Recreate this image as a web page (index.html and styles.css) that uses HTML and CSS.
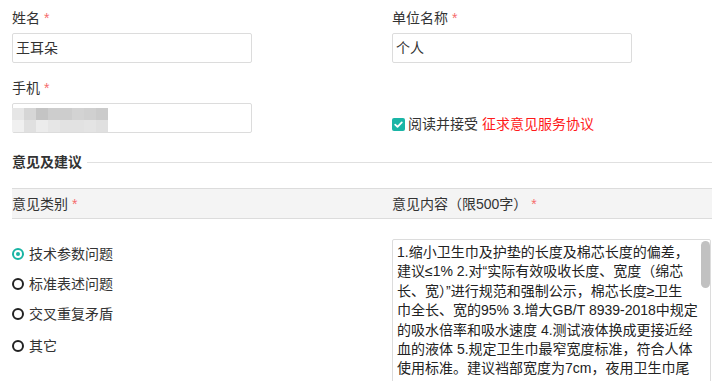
FILE: index.html
```html
<!DOCTYPE html>
<html lang="zh-CN">
<head>
<meta charset="utf-8">
<title>意见及建议</title>
<link rel="stylesheet" href="styles.css">
</head>
<body>
<div class="page">
  <div class="grid">
    <div class="col">
      <div class="field">
        <div class="label">姓名 <span class="req">*</span></div>
        <div class="input">王耳朵</div>
      </div>
      <div class="field field2">
        <div class="label">手机 <span class="req">*</span></div>
        <div class="input redacted-wrap">
          <div class="redact">
            <div class="rrow"><i style="background:#e6e6e6"></i><i style="background:#d6d6d6"></i><i style="background:#c4c4c4"></i><i style="background:#cdcdcd"></i><i style="background:#cdcdcd"></i><i style="background:#d3d3d3"></i><i style="background:#d0d0d0"></i><i style="background:#cbcbcb"></i></div>
            <div class="rrow"><i style="background:#f0f0f0"></i><i style="background:#e0e0e0"></i><i style="background:#ececec"></i><i style="background:#e6e6e6"></i><i style="background:#e2e2e2"></i><i style="background:#e2e2e2"></i><i style="background:#e4e4e4"></i><i style="background:#e0e0e0"></i></div>
          </div>
        </div>
      </div>
    </div>
    <div class="col">
      <div class="field">
        <div class="label">单位名称 <span class="req">*</span></div>
        <div class="input">个人</div>
      </div>
      <div class="agree">
        <span class="checkbox"><svg viewBox="0 0 13 13" width="13" height="13"><path d="M3.2 6.6 L5.5 8.8 L9.8 4.4" fill="none" stroke="#fff" stroke-width="1.8" stroke-linecap="round" stroke-linejoin="round"/></svg></span>
        <span class="agree-text">阅读并接受 <span class="link">征求意见服务协议</span></span>
      </div>
    </div>
  </div>

  <div class="section-title"><span>意见及建议</span><span class="line"></span></div>

  <div class="thead">
    <div class="th">意见类别 <span class="req">*</span></div>
    <div class="th">意见内容（限500字） <span class="req">*</span></div>
  </div>

  <div class="body-grid">
    <div class="radios">
      <div class="radio-row"><span class="radio checked"></span><span>技术参数问题</span></div>
      <div class="radio-row"><span class="radio"></span><span>标准表述问题</span></div>
      <div class="radio-row"><span class="radio"></span><span>交叉重复矛盾</span></div>
      <div class="radio-row last"><span class="radio"></span><span>其它</span></div>
    </div>
    <div class="textarea">
      <div class="ta-text">1.缩小卫生巾及护垫的长度及棉芯长度的偏差，<br>建议≤1% 2.对“实际有效吸收长度、宽度（绵芯<br>长、宽）”进行规范和强制公示，棉芯长度≥卫生<br>巾全长、宽的95% 3.增大GB/T 8939-2018中规定<br>的吸水倍率和吸水速度 4.测试液体换成更接近经<br>血的液体 5.规定卫生巾最窄宽度标准，符合人体<br>使用标准。建议裆部宽度为7cm，夜用卫生巾尾</div>
      <span class="thumb"></span>
    </div>
  </div>
</div>
</body>
</html>
```

FILE: styles.css
```css
* { box-sizing: border-box; }
html, body { margin: 0; padding: 0; background: #fff; }
body {
  font-family: "Liberation Sans", "Noto Sans CJK SC", sans-serif;
  font-size: 14px;
  color: #333;
  overflow: hidden;
  height: 381px;
}
.page { padding: 8px 0 0 12px; }
.grid { display: grid; grid-template-columns: 380px 320px; align-items: start; }
.label { line-height: 20px; height: 20px; }
.req { color: #f56c6c; }
.input {
  margin-top: 5px;
  width: 240px;
  height: 30px;
  border: 1px solid #dcdcdc;
  border-radius: 2px;
  line-height: 28px;
  padding: 0 3px;
  color: #333;
}
.field2 { margin-top: 15px; }
.redacted-wrap { position: relative; }
.redact { position: absolute; left: -1px; top: 4px; filter: blur(0.6px); }
.rrow { display: flex; }
.rrow i { display: block; width: 12px; height: 12px; }
.agree {
  margin-top: 54px;
  display: flex;
  align-items: center;
  height: 14px;
}
.checkbox {
  width: 13px; height: 13px;
  background: #1ab5a6;
  border-radius: 2px;
  display: inline-flex;
  margin-right: 3px;
}
.checkbox svg { display: block; }
.agree-text { line-height: 20px; }
.link { color: #ff1a1a; }
.section-title {
  margin-top: 19px;
  display: flex;
  align-items: center;
  font-weight: bold;
  line-height: 20px;
}
.section-title .line { flex: 1; height: 1px; background: #e0e0e0; margin-left: 5px; margin-top: 1px; }
.thead {
  margin-top: 16px;
  display: grid;
  grid-template-columns: 380px 1fr;
  background: #f4f4f4;
  border-top: 1px solid #dcdcdc;
  border-bottom: 1px solid #dcdcdc;
  height: 31px;
  align-items: center;
}
.th { line-height: 20px; }
.body-grid {
  display: grid;
  grid-template-columns: 380px 1fr;
  padding-top: 20px;
  align-items: start;
}
.radio-row {
  display: flex;
  align-items: center;
  height: 30px;
  line-height: 20px;
}
.radio-row.last { height: 32px; padding-top: 2px; }
.radio {
  width: 12px; height: 12px;
  border: 2px solid #222;
  border-radius: 50%;
  margin: 0 5px 0 0;
  position: relative;
  flex: none;
}
.radio.checked { border-color: #19b4a4; }
.radio.checked::after {
  content: "";
  position: absolute;
  left: 2px; top: 2px;
  width: 4px; height: 4px;
  border-radius: 50%;
  background: #19b4a4;
}
.textarea {
  position: relative;
  width: 319px;
  height: 150px;
  border: 1px solid #dcdcdc;
  border-radius: 2px;
  padding: 3px 12px 0 4px;
  overflow: hidden;
}
.ta-text { line-height: 19.4px; white-space: nowrap; color: #222; }
.thumb {
  position: absolute;
  right: 0; top: 1px;
  width: 9px; height: 47px;
  border-radius: 5px;
  background: #c1c1c1;
}
```
